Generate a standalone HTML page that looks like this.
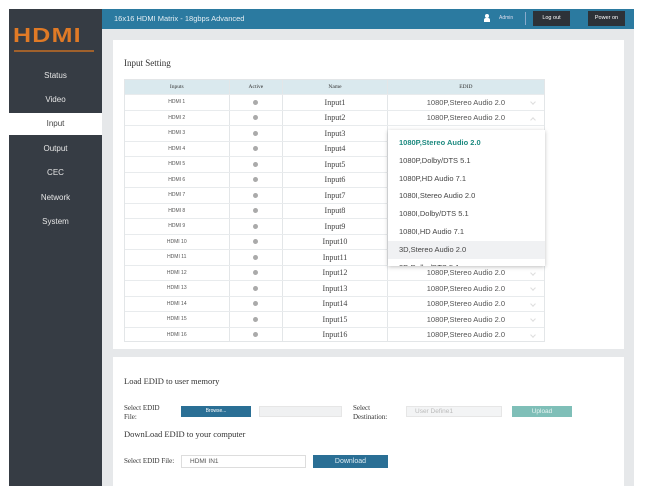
<!DOCTYPE html><html><head><style>
*{margin:0;padding:0;box-sizing:border-box}
body{width:648px;height:501px;background:#fff;position:relative;font-family:"Liberation Sans",sans-serif;overflow:hidden}
.abs{position:absolute}
.side{left:9px;top:9px;width:93px;height:477px;background:#363c44}
.nav{position:absolute;left:0;width:93px;text-align:center;color:#e6e6e6;font-size:8px}
.top{left:102px;top:9px;width:532px;height:20px;background:#2b7aa0}
.main{left:102px;top:29px;width:532px;height:457px;background:#e6e8ea}
.card{background:#fff}
.serif{font-family:"Liberation Serif",serif}
.tbl{position:absolute;left:124px;top:79px;width:421px;height:263px;border:1px solid #e3e6e8;overflow:hidden}
.row{position:relative;height:15.5px;border-bottom:1px solid #e8ebed;display:flex}
.row>div{height:100%;display:flex;align-items:center;justify-content:center;border-right:1px solid #e3e6e8;position:relative}
.row>div:nth-child(1){width:105px}.row>div:nth-child(2){width:54px}.row>div:nth-child(3){width:105px}.row>div:nth-child(4){width:157px;border-right:none}
.hd{background:#dae9ee;height:15px}
.hd>div{font-family:"Liberation Serif",serif;font-size:5.5px;color:#333}
.a{font-size:5px;color:#555}
.n{font-family:"Liberation Serif",serif;font-size:8px;color:#444}
.e{font-size:7.5px;color:#555}
.dot{display:inline-block;width:5px;height:5px;border-radius:50%;background:#aaa}
.chev{position:absolute;right:9px;top:5px;width:4px;height:4px;border-right:1px solid #ddd;border-bottom:1px solid #ddd;transform:rotate(45deg)}
.chev.up{top:7px;transform:rotate(-135deg)}
.dd{left:388px;top:130px;width:157px;height:136px;background:#fff;box-shadow:0 1px 4px rgba(0,0,0,.25);overflow:hidden}
.dd div{height:17.8px;line-height:17.8px;padding-left:11px;font-size:7.5px;color:#444}
.btn{background:#2a6f95;color:#fff;text-align:center}
</style></head><body>
<div class="abs side">
 <div class="abs" style="left:4px;top:16px;font:900 20px 'Liberation Sans',sans-serif;color:#e07a26;letter-spacing:1px;transform:scaleX(1.25);transform-origin:left">HDMI</div>
 <div class="abs" style="left:5px;top:41px;width:80px;height:2px;background:#a0612c"></div>
 <div class="nav" style="top:62px">Status</div>
 <div class="nav" style="top:86px">Video</div>
 <div class="nav" style="top:104px;height:22px;background:#fff;color:#444;line-height:22px">Input</div>
 <div class="nav" style="top:135px">Output</div>
 <div class="nav" style="top:159px">CEC</div>
 <div class="nav" style="top:184px">Network</div>
 <div class="nav" style="top:208px">System</div>
</div>
<div class="abs top">
 <div class="abs" style="left:12px;top:5px;color:#e5eef3;font-size:7.5px">16x16 HDMI Matrix - 18gbps Advanced</div>
 <div class="abs" style="left:383px;top:5px;width:4px;height:4px;background:#fff;border-radius:50%"></div>
 <div class="abs" style="left:382px;top:9px;width:6px;height:4px;background:#fff;border-radius:2px 2px 0 0"></div>
 <div class="abs" style="left:397px;top:6px;color:#dde;font-size:5px">Admin</div>
 <div class="abs" style="left:423px;top:3px;width:1px;height:13px;background:#8ac"></div>
 <div class="abs" style="left:431px;top:2px;width:37px;height:15px;background:#2d3238;color:#fff;font-size:5.5px;text-align:center;line-height:15px">Log out</div>
 <div class="abs" style="left:486px;top:2px;width:37px;height:15px;background:#2d3238;color:#fff;font-size:5.5px;text-align:center;line-height:15px">Power on</div>
</div>
<div class="abs main"></div>
<div class="abs card" style="left:113px;top:40px;width:511px;height:309px"></div>
<div class="abs card" style="left:113px;top:357px;width:511px;height:129px"></div>
<div class="abs serif" style="left:124px;top:58px;font-size:9px;color:#333">Input Setting</div>
<div class="tbl">
<div class="row hd"><div>Inputs</div><div>Active</div><div>Name</div><div>EDID</div></div>
<div class="row"><div class="a">HDMI 1</div><div><span class="dot"></span></div><div class="n">Input1</div><div class="e">1080P,Stereo Audio 2.0<span class="chev"></span></div></div>
<div class="row"><div class="a">HDMI 2</div><div><span class="dot"></span></div><div class="n">Input2</div><div class="e">1080P,Stereo Audio 2.0<span class="chev up"></span></div></div>
<div class="row"><div class="a">HDMI 3</div><div><span class="dot"></span></div><div class="n">Input3</div><div class="e"></div></div>
<div class="row"><div class="a">HDMI 4</div><div><span class="dot"></span></div><div class="n">Input4</div><div class="e"></div></div>
<div class="row"><div class="a">HDMI 5</div><div><span class="dot"></span></div><div class="n">Input5</div><div class="e"></div></div>
<div class="row"><div class="a">HDMI 6</div><div><span class="dot"></span></div><div class="n">Input6</div><div class="e"></div></div>
<div class="row"><div class="a">HDMI 7</div><div><span class="dot"></span></div><div class="n">Input7</div><div class="e"></div></div>
<div class="row"><div class="a">HDMI 8</div><div><span class="dot"></span></div><div class="n">Input8</div><div class="e"></div></div>
<div class="row"><div class="a">HDMI 9</div><div><span class="dot"></span></div><div class="n">Input9</div><div class="e"></div></div>
<div class="row"><div class="a">HDMI 10</div><div><span class="dot"></span></div><div class="n">Input10</div><div class="e"></div></div>
<div class="row"><div class="a">HDMI 11</div><div><span class="dot"></span></div><div class="n">Input11</div><div class="e"></div></div>
<div class="row"><div class="a">HDMI 12</div><div><span class="dot"></span></div><div class="n">Input12</div><div class="e">1080P,Stereo Audio 2.0<span class="chev"></span></div></div>
<div class="row"><div class="a">HDMI 13</div><div><span class="dot"></span></div><div class="n">Input13</div><div class="e">1080P,Stereo Audio 2.0<span class="chev"></span></div></div>
<div class="row"><div class="a">HDMI 14</div><div><span class="dot"></span></div><div class="n">Input14</div><div class="e">1080P,Stereo Audio 2.0<span class="chev"></span></div></div>
<div class="row"><div class="a">HDMI 15</div><div><span class="dot"></span></div><div class="n">Input15</div><div class="e">1080P,Stereo Audio 2.0<span class="chev"></span></div></div>
<div class="row"><div class="a">HDMI 16</div><div><span class="dot"></span></div><div class="n">Input16</div><div class="e">1080P,Stereo Audio 2.0<span class="chev"></span></div></div>
</div>
<div class="abs dd">
 <div style="margin-top:4px;color:#1e8a80;font-weight:bold">1080P,Stereo Audio 2.0</div>
 <div>1080P,Dolby/DTS 5.1</div>
 <div>1080P,HD Audio 7.1</div>
 <div>1080I,Stereo Audio 2.0</div>
 <div>1080I,Dolby/DTS 5.1</div>
 <div>1080I,HD Audio 7.1</div>
 <div style="background:#f0f1f3">3D,Stereo Audio 2.0</div>
 <div>3D,Dolby/DTS 5.1</div>
</div>
<div class="abs serif" style="left:124px;top:376px;font-size:8.5px;color:#333">Load EDID to user memory</div>
<div class="abs serif" style="left:124px;top:404px;font-size:7px;color:#333;line-height:9px">Select EDID<br>File:</div>
<div class="abs btn" style="left:181px;top:406px;width:70px;height:11px;font-size:5px;line-height:11px">Browse...</div>
<div class="abs" style="left:259px;top:406px;width:83px;height:11px;background:#f0f1f2;border:1px solid #e6e6e6"></div>
<div class="abs serif" style="left:353px;top:404px;font-size:7px;color:#333;line-height:9px">Select<br>Destination:</div>
<div class="abs" style="left:406px;top:406px;width:96px;height:11px;background:#f3f4f5;border:1px solid #e6e6e6;font-size:6.5px;color:#bbb;padding-left:8px;line-height:9px">User Define1</div>
<div class="abs" style="left:512px;top:406px;width:60px;height:11px;background:#7fbfb8;color:#e8f4f2;font-size:6.5px;text-align:center;line-height:11px">Upload</div>
<div class="abs serif" style="left:124px;top:429px;font-size:8.5px;color:#333">DownLoad EDID to your computer</div>
<div class="abs serif" style="left:124px;top:457px;font-size:7px;color:#333">Select EDID File:</div>
<div class="abs" style="left:181px;top:455px;width:125px;height:13px;border:1px solid #ddd;font-size:6.5px;color:#555;padding-left:8px;line-height:11px">HDMI IN1</div>
<div class="abs btn" style="left:313px;top:455px;width:75px;height:13px;font-size:7px;line-height:13px;color:#dcebf2">Download</div>
</body></html>
